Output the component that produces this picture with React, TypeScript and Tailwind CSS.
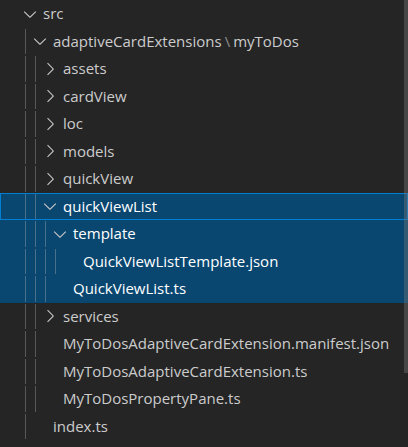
import React from 'react';

type Twistie = 'down' | 'right' | 'none';

interface Row {
  depth: number;
  label: React.ReactNode;
  twistie: Twistie;
  selected?: boolean;
  focused?: boolean;
}

const ChevronDown = () => (
  <svg width="20" height="20" viewBox="0 0 16 16" fill="currentColor">
    <path d="M7.976 10.072l4.357-4.357.62.618L8.284 11h-.618L3 6.333l.619-.618 4.357 4.357z" />
  </svg>
);

const ChevronRight = () => (
  <svg width="20" height="20" viewBox="0 0 16 16" fill="currentColor">
    <path d="M10.072 8.024L5.715 3.667l.618-.62L11 7.716v.618L6.333 13l-.618-.619 4.357-4.357z" />
  </svg>
);

const rows: Row[] = [
  { depth: 0, label: 'src', twistie: 'down' },
  {
    depth: 1,
    twistie: 'down',
    label: (
      <>
        adaptiveCardExtensions
        <span className="mx-[3px] opacity-60">\</span>
        myToDos
      </>
    ),
  },
  { depth: 2, label: 'assets', twistie: 'right' },
  { depth: 2, label: 'cardView', twistie: 'right' },
  { depth: 2, label: 'loc', twistie: 'right' },
  { depth: 2, label: 'models', twistie: 'right' },
  { depth: 2, label: 'quickView', twistie: 'right' },
  { depth: 2, label: 'quickViewList', twistie: 'down', selected: true, focused: true },
  { depth: 3, label: 'template', twistie: 'down', selected: true },
  { depth: 4, label: 'QuickViewListTemplate.json', twistie: 'none', selected: true },
  { depth: 3, label: 'QuickViewList.ts', twistie: 'none', selected: true },
  { depth: 2, label: 'services', twistie: 'right' },
  { depth: 2, label: 'MyToDosAdaptiveCardExtension.manifest.json', twistie: 'none' },
  { depth: 2, label: 'MyToDosAdaptiveCardExtension.ts', twistie: 'none' },
  { depth: 2, label: 'MyToDosPropertyPane.ts', twistie: 'none' },
  { depth: 1, label: 'index.ts', twistie: 'none' },
  // next root folder, only its chevron tip peeks in at the bottom edge
  { depth: 0, label: '', twistie: 'right' },
];

function TreeRow({ row }: { row: Row }) {
  const bg = row.selected ? 'bg-[#094771] text-white' : 'text-[#cccccc]';
  const border = row.focused ? 'border border-[#007fd4]' : 'border border-transparent';
  return (
    <div className={`flex h-[27.5px] shrink-0 items-stretch pl-[19px] ${bg} ${border}`}>
      {Array.from({ length: row.depth }).map((_, i) => (
        <div key={i} className="w-[10px] shrink-0">
          <div className={`ml-[5px] h-full w-px ${row.selected ? 'bg-[#4a6f8a]' : 'bg-[#585858]'}`} />
        </div>
      ))}
      <div className="flex w-[20px] shrink-0 items-center justify-center text-[#c5c5c5]">
        {row.twistie === 'down' && <ChevronDown />}
        {row.twistie === 'right' && <ChevronRight />}
      </div>
      <span className="ml-[3px] flex items-center whitespace-nowrap pb-px">{row.label}</span>
    </div>
  );
}

export default function App() {
  return (
    <div
      className="relative h-[447px] w-[408px] overflow-hidden bg-[#252526] text-[15px]"
      style={{ fontFamily: '"Segoe UI", "Open Sans", "Noto Sans", sans-serif' }}
    >
      <div className="flex flex-col">
        {rows.map((row, i) => (
          <TreeRow key={i} row={row} />
        ))}
      </div>
      {/* scrollbar slider */}
      <div className="absolute right-0 top-0 h-[373px] w-[4px] bg-[#79797966]" />
    </div>
  );
}
